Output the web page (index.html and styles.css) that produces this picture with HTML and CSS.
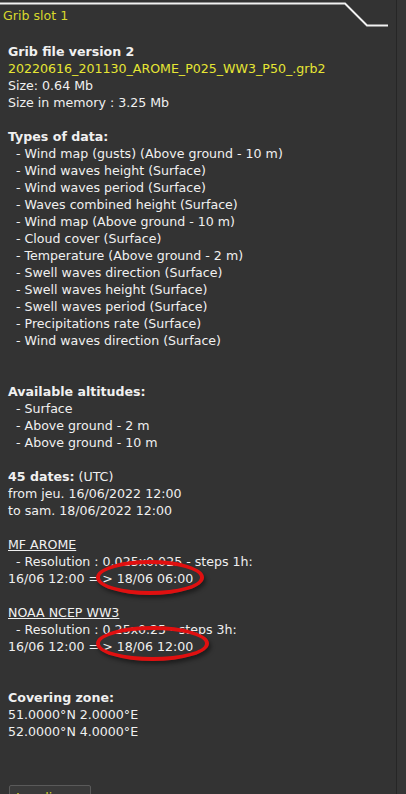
FILE: index.html
```html
<!DOCTYPE html>
<html lang="en">
  <head>
    <title>Grib slot 1</title>
    <meta charset="UTF-8" />
    <meta name="viewport" content="width=device-width, initial-scale=1.0" />
    <link rel="stylesheet" href="styles.css">
  </head>

  <body>
    <div class="panel">
      <div class="tab-header">
        <span class="tab-title">Grib slot 1</span>
        <svg class="tab-line" width="396" height="30" viewBox="0 0 396 30">
          <polyline points="0,3.5 345,3.5 367,25.5 388,25.5" fill="none" stroke="#f2f2f2" stroke-width="2" />
        </svg>
      </div>

      <div class="info">
        <p class="line"><b>Grib file version 2</b></p>
        <p class="line file-name">20220616_201130_AROME_P025_WW3_P50_.grb2</p>
        <p class="line">Size: 0.64 Mb</p>
        <p class="line">Size in memory : 3.25 Mb</p>
        <p class="line empty"></p>
        <p class="line"><b>Types of data:</b></p>
        <p class="line item">- Wind map (gusts) (Above ground - 10 m)</p>
        <p class="line item">- Wind waves height (Surface)</p>
        <p class="line item">- Wind waves period (Surface)</p>
        <p class="line item">- Waves combined height (Surface)</p>
        <p class="line item">- Wind map (Above ground - 10 m)</p>
        <p class="line item">- Cloud cover (Surface)</p>
        <p class="line item">- Temperature (Above ground - 2 m)</p>
        <p class="line item">- Swell waves direction (Surface)</p>
        <p class="line item">- Swell waves height (Surface)</p>
        <p class="line item">- Swell waves period (Surface)</p>
        <p class="line item">- Precipitations rate (Surface)</p>
        <p class="line item">- Wind waves direction (Surface)</p>
        <p class="line empty"></p>
        <p class="line empty"></p>
        <p class="line"><b>Available altitudes:</b></p>
        <p class="line item">- Surface</p>
        <p class="line item">- Above ground - 2 m</p>
        <p class="line item">- Above ground - 10 m</p>
        <p class="line empty"></p>
        <p class="line"><b>45 dates:</b> (UTC)</p>
        <p class="line">from jeu. 16/06/2022 12:00</p>
        <p class="line">to sam. 18/06/2022 12:00</p>
        <p class="line empty"></p>
        <p class="line"><u>MF AROME</u></p>
        <p class="line item">- Resolution : 0.025x0.025 - steps 1h:</p>
        <p class="line">16/06 12:00 =<span class="circled">&gt; 18/06 06:00</span></p>
        <p class="line empty"></p>
        <p class="line"><u>NOAA NCEP WW3</u></p>
        <p class="line item">- Resolution : 0.25x0.25 - steps 3h:</p>
        <p class="line">16/06 12:00 =<span class="circled wide">&gt; 18/06 12:00</span></p>
        <p class="line empty"></p>
        <p class="line empty"></p>
        <p class="line"><b>Covering zone:</b></p>
        <p class="line">51.0000°N 2.0000°E</p>
        <p class="line">52.0000°N 4.0000°E</p>
      </div>

      <button class="btn-load" type="button">Localiser</button>
    </div>
  </body>
</html>
```

FILE: styles.css
```css
body {
  margin: 0;
  background-color: #353535;
  font-family: "DejaVu Sans", Verdana, sans-serif;
  font-size: 12.6px;
  color: #f0f0f0;
  height: 794px;
  overflow: hidden;
}

.panel {
  width: 396px;
  height: 794px;
  background-color: #333333;
  border-right: 1px solid #262626;
}

.tab-header {
  position: relative;
  height: 30px;
}

.tab-title {
  display: block;
  padding: 8px 0 0 3px;
  color: #d8d82c;
}

.tab-line {
  position: absolute;
  top: 0;
  left: 0;
}

.info {
  padding: 13px 0 0 8px;
}

.line {
  margin: 0;
  height: 17px;
  line-height: 17px;
  white-space: nowrap;
}

.item {
  padding-left: 8px;
}

.file-name {
  color: #e6e634;
}

.circled {
  position: relative;
  padding-left: 3px;
}

.circled::after {
  content: "";
  position: absolute;
  left: -3px;
  top: -11px;
  width: 100px;
  height: 27px;
  border: 4px solid #e01010;
  border-radius: 50%;
  box-shadow: 2px 3px 4px rgba(0, 0, 0, 0.45);
}

.circled.wide::after {
  width: 105px;
  top: -13px;
}

.btn-load {
  margin: 45px 0 0 9px;
  width: 82px;
  height: 24px;
  background-color: #3a3a3a;
  border: 1px solid #5a5a5a;
  border-radius: 2px;
  color: #d8d82c;
  font-family: "DejaVu Sans", Verdana, sans-serif;
  font-size: 12.6px;
  text-align: left;
  padding: 2px 6px;
}
```
